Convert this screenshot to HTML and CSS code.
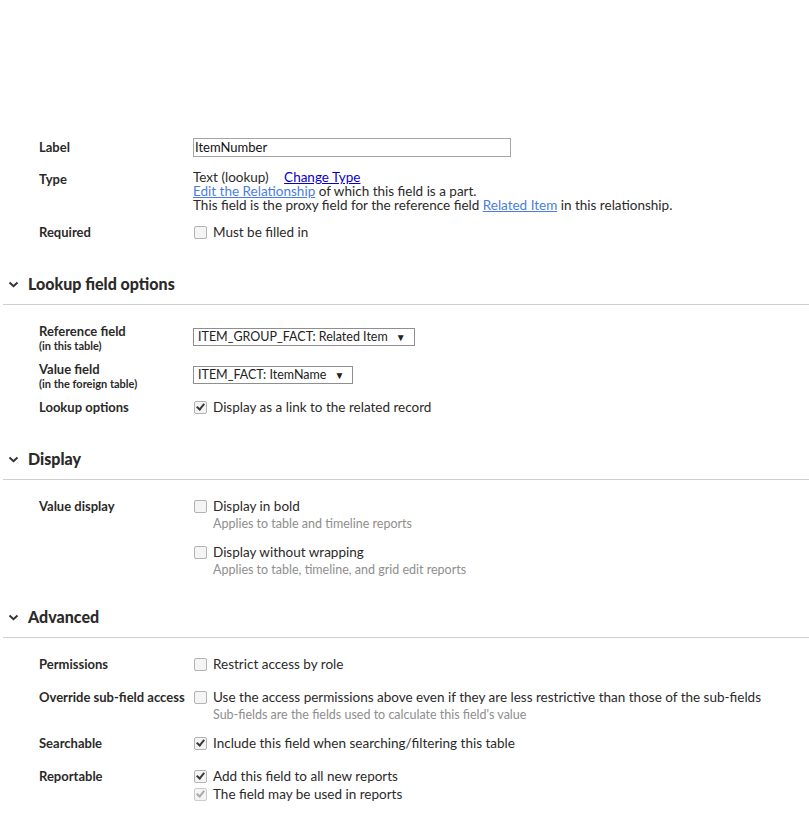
FILE: index.html
```html
<!DOCTYPE html>
<html lang="en">
<head>
  <meta charset="UTF-8">
  <title>Field Properties</title>
  <link rel="stylesheet" href="styles.css">
</head>
<body>
  <div class="page">
    <div class="row">
      <div class="label">Label</div>
      <div class="value"><div class="textbox">ItemNumber</div></div>
    </div>
    <div class="row type-row">
      <div class="label">Type</div>
      <div class="value tight">
        <div>Text (lookup) <a class="classic" href="#">Change Type</a></div>
        <div><a class="soft" href="#">Edit the Relationship</a> of which this field is a part.</div>
        <div>This field is the proxy field for the reference field <a class="soft" href="#">Related Item</a> in this relationship.</div>
      </div>
    </div>
    <div class="row r11">
      <div class="label">Required</div>
      <div class="value"><div class="opt"><span class="box"></span>Must be filled in</div></div>
    </div>

    <h2 class="section"><span class="chev"><svg width="11" height="7" viewBox="0 0 11 7"><path d="M1.5 1.5 L5.5 5.2 L9.5 1.5" fill="none" stroke="#333" stroke-width="2"/></svg></span>Lookup field options</h2>
    <div class="row r17">
      <div class="label">Reference field<small>(in this table)</small></div>
      <div class="value"><div class="select">ITEM_GROUP_FACT: Related Item<span class="arrow">▼</span></div></div>
    </div>
    <div class="row r8">
      <div class="label">Value field<small>(in the foreign table)</small></div>
      <div class="value"><div class="select">ITEM_FACT: ItemName<span class="arrow">▼</span></div></div>
    </div>
    <div class="row r8">
      <div class="label">Lookup options</div>
      <div class="value"><div class="opt"><span class="box on"></span>Display as a link to the related record</div></div>
    </div>

    <h2 class="section"><span class="chev"><svg width="11" height="7" viewBox="0 0 11 7"><path d="M1.5 1.5 L5.5 5.2 L9.5 1.5" fill="none" stroke="#333" stroke-width="2"/></svg></span>Display</h2>
    <div class="row r17">
      <div class="label">Value display</div>
      <div class="value">
        <div class="opt"><span class="box"></span>Display in bold</div>
        <div class="hint">Applies to table and timeline reports</div>
        <div class="opt next"><span class="box"></span>Display without wrapping</div>
        <div class="hint">Applies to table, timeline, and grid edit reports</div>
      </div>
    </div>

    <h2 class="section adv"><span class="chev"><svg width="11" height="7" viewBox="0 0 11 7"><path d="M1.5 1.5 L5.5 5.2 L9.5 1.5" fill="none" stroke="#333" stroke-width="2"/></svg></span>Advanced</h2>
    <div class="row r17">
      <div class="label">Permissions</div>
      <div class="value"><div class="opt"><span class="box"></span>Restrict access by role</div></div>
    </div>
    <div class="row">
      <div class="label">Override sub-field access</div>
      <div class="value">
        <div class="opt"><span class="box"></span>Use the access permissions above even if they are less restrictive than those of the sub-fields</div>
        <div class="hint">Sub-fields are the fields used to calculate this field's value</div>
      </div>
    </div>
    <div class="row r10">
      <div class="label">Searchable</div>
      <div class="value"><div class="opt"><span class="box on"></span>Include this field when searching/filtering this table</div></div>
    </div>
    <div class="row">
      <div class="label">Reportable</div>
      <div class="value">
        <div class="opt"><span class="box on"></span>Add this field to all new reports</div>
        <div class="opt"><span class="box on dim"></span>The field may be used in reports</div>
      </div>
    </div>
  </div>
</body>
</html>
```

FILE: styles.css
```css
body { margin: 0; font-family: Lato, "Open Sans", sans-serif; font-size: 13.5px; color: #2b2a29; background: #fff; }
.page { padding-top: 138px; padding-bottom: 20px; }
.row { display: grid; grid-template-columns: 154px 1fr; padding-left: 39px; margin-top: 15px; line-height: 18px; }
.row:first-child { margin-top: 0; }
.type-row { margin-top: 13px; }
.r8 { margin-top: 8px; }
.r10 { margin-top: 10px; }
.r11 { margin-top: 11px; }
.r17 { margin-top: 17px; }
.label { font-weight: bold; font-size: 13px; }
.label small { display: block; font-size: 11px; line-height: 12px; }
.value.tight { line-height: 14px; }
.textbox { width: 314px; height: 17px; border: 1px solid #a5a5a5; padding: 0 1px; line-height: 17px; font-size: 13px; color: #111; }
.select { display: inline-block; margin-top: 6px; height: 16px; line-height: 16px; border: 1px solid #8f8f8f; padding: 0 8px 0 4px; font-size: 12.5px; color: #222; }
.arrow { font-size: 10px; margin-left: 8px; }
a.classic { color: #0b00c8; margin-left: 12px; }
a.soft { color: #4a7de0; }
.opt { display: flex; align-items: center; }
.opt.next { margin-top: 10px; }
.box { width: 11px; height: 11px; border: 1px solid #b3b3b3; border-radius: 2px; background: #f4f4f4; margin: 0 6px 0 1px; position: relative; flex: none; }
.box.on::after { content: ""; position: absolute; left: 3px; top: 0px; width: 3px; height: 6px; border: solid #3a3a3a; border-width: 0 2px 2px 0; transform: rotate(40deg); }
.box.dim::after { border-color: #aaa; }
.box.dim { border-color: #ccc; }
.hint { font-size: 12.5px; color: #8e8e8e; padding-left: 20px; line-height: 18px; }
.section { margin: 33px 0 0 3px; padding: 0 0 10px 5px; border-bottom: 1px solid #cfcfcf; font-size: 16px; line-height: 20px; font-weight: 900; color: #2b2a29; display: flex; align-items: center; }
.section.adv { margin-top: 28px; }
.chev { width: 20px; display: inline-flex; align-items: center; }
```
